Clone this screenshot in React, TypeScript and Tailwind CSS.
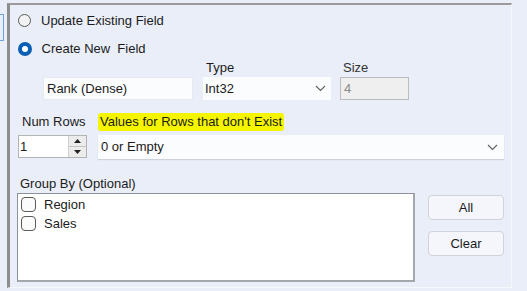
import React from 'react'

function Chevron() {
  return (
    <svg width="11" height="7" viewBox="0 0 11 7" className="shrink-0">
      <path d="M1 1 L5.5 5.5 L10 1" fill="none" stroke="#5f5f5f" strokeWidth="1.1" />
    </svg>
  )
}

function Radio({ checked, label }: { checked?: boolean; label: string }) {
  return (
    <div className="flex items-center h-[13px] gap-[10px]">
      {checked ? (
        <div className="w-[14px] h-[14px] -ml-[0.5px] rounded-full bg-[#0a5fb4] flex items-center justify-center">
          <div className="w-[6px] h-[6px] rounded-full bg-white" />
        </div>
      ) : (
        <div className="w-[13px] h-[13px] rounded-full border border-[#5a5a5a] bg-[#f2f2f2]" />
      )}
      <span className="leading-none whitespace-pre">{label}</span>
    </div>
  )
}

function Check({ label }: { label: string }) {
  return (
    <div className="flex items-center h-[19px] gap-[8px]">
      <div className="w-[15px] h-[15px] rounded-[4px] border border-[#5a5a5a] bg-[#fbfbfb]" />
      <span className="leading-none">{label}</span>
    </div>
  )
}

function Btn({ children }: { children: string }) {
  return (
    <button className="w-[76px] h-[25px] rounded-[4px] border border-[#cfd2d8] bg-[#f4f6fb] text-[13px] text-[#1b1b1b] flex items-center justify-center">
      {children}
    </button>
  )
}

export default function App() {
  return (
    <div className="w-[527px] h-[291px] bg-[#eaeef8] relative overflow-hidden font-['Liberation_Sans',Arial,sans-serif] text-[13px] text-[#1b1b1b]">
      {/* fragment of neighbouring control */}
      <div className="absolute left-0 top-[14px] w-[4px] h-[27px] border border-l-0 border-[#6fa3dc]" />

      <div className="ml-[7px] mt-[3px] w-[505px] h-[285px] border-l-[3px] border-t-2 border-r border-b border-l-[#8d8d8d] border-t-[#9a9a9a] border-r-[#f7f8fb] border-b-[#f7f8fb] flex flex-col">
        <div className="ml-[8px] mt-[9px]">
          <Radio label="Update Existing Field" />
        </div>
        <div className="ml-[8px] mt-[15px]">
          <Radio checked label="Create New  Field" />
        </div>

        {/* field name / type / size */}
        <div className="flex items-end mt-[6px]">
          <div className="ml-[33px] w-[150px] h-[23px] bg-[#fbfcfe] border border-[#e6e9f0] flex items-center pl-[3px]">
            Rank (Dense)
          </div>
          <div className="ml-[10px] flex flex-col">
            <span className="pl-[3px] leading-none mb-[3px]">Type</span>
            <div className="w-[128px] h-[23px] bg-[#fbfcfe] flex items-center justify-between pl-[2px] pr-[5px]">
              <span>Int32</span>
              <Chevron />
            </div>
          </div>
          <div className="ml-[9px] flex flex-col">
            <span className="pl-[3px] leading-none mb-[3px] text-[#333]">Size</span>
            <div className="w-[69px] h-[23px] bg-[#efefef] border border-[#bcbcbc] flex items-center pl-[3px] text-[#8a8a8a]">
              4
            </div>
          </div>
        </div>

        {/* num rows / values */}
        <div className="flex mt-[13px]">
          <div className="ml-[8px] flex flex-col">
            <span className="pl-[4px] h-[18px] flex items-center">Num Rows</span>
            <div className="mt-[4px] w-[69px] h-[23px] flex border border-[#b4b4b4] bg-white">
              <div className="flex-1 flex items-center pl-[1px]">1</div>
              <div className="w-[18px] flex flex-col border-l border-[#d0d0d0] bg-[#ececec]">
                <div className="flex-1 flex items-center justify-center border-b border-[#c4c4c4]">
                  <svg width="7" height="4" viewBox="0 0 7 4"><path d="M0 4 L3.5 0 L7 4 Z" fill="#222" /></svg>
                </div>
                <div className="flex-1 flex items-center justify-center">
                  <svg width="7" height="4" viewBox="0 0 7 4"><path d="M0 0 L3.5 4 L7 0 Z" fill="#222" /></svg>
                </div>
              </div>
            </div>
          </div>
          <div className="ml-[11px] flex flex-col">
            <span className="self-start h-[18px] flex items-center px-[2px] bg-[#f5f500] rounded-[3px]">
              Values for Rows that don't Exist
            </span>
            <div className="mt-[4px] w-[406px] h-[24px] bg-[#fbfcfe] shadow-[0_1px_1px_rgba(0,0,0,0.12)] flex items-center justify-between pl-[3px] pr-[6px]">
              <span>0 or Empty</span>
              <Chevron />
            </div>
          </div>
        </div>

        {/* group by */}
        <span className="ml-[10px] mt-[18px] leading-none">Group By (Optional)</span>
        <div className="flex mt-[3px]">
          <div className="ml-[7px] w-[398px] h-[89px] bg-white border border-[#8e9199] border-b-2 border-r-2 border-b-[#a4a7ad] border-r-[#a4a7ad] pl-[3px] pt-[1px] flex flex-col">
            <Check label="Region" />
            <Check label="Sales" />
          </div>
          <div className="ml-[13px] mt-[2px] flex flex-col gap-[11px]">
            <Btn>All</Btn>
            <Btn>Clear</Btn>
          </div>
        </div>
      </div>
    </div>
  )
}
